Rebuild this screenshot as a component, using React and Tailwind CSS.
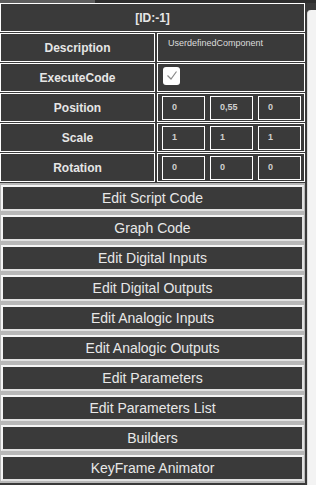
import React, { useState } from 'react';

const font = { fontFamily: '"Liberation Sans", Arial, sans-serif' };

const rows = [
    { label: 'Position', values: ['0', '0,55', '0'] },
    { label: 'Scale', values: ['1', '1', '1'] },
    { label: 'Rotation', values: ['0', '0', '0'] },
];

const buttons = [
    'Edit Script Code',
    'Graph Code',
    'Edit Digital Inputs',
    'Edit Digital Outputs',
    'Edit Analogic Inputs',
    'Edit Analogic Outputs',
    'Edit Parameters',
    'Edit Parameters List',
    'Builders',
    'KeyFrame Animator',
];

const Row = ({ label, children }) => (
    <div className="flex h-[30px] pt-[1px] gap-[2px]">
        <div className="w-[155px] border border-white flex items-center justify-center text-[12px] font-bold text-[#e6e6e6]">
            {label}
        </div>
        <div className="flex-1 border border-white flex items-center">{children}</div>
    </div>
);

const App = () => {
    const [execute, setExecute] = useState(true);

    return (
        <div className="w-[316px] h-[485px] bg-[#3a3a3a] overflow-hidden flex flex-col" style={font}>
            <div className="h-[3px] flex">
                <div className="w-[95px] bg-[#5e5e5e]" />
                <div className="flex-1 bg-[#2e2e2e]" />
            </div>
            <div className="flex flex-1">
                <div className="w-[305px] flex flex-col">
                    {/* Header */}
                    <div className="h-[29px] border border-white flex items-center justify-center text-[12px] font-bold text-[#e6e6e6]">
                        [ID:-1]
                    </div>

                    <Row label="Description">
                        <span className="pl-[10px] -mt-[8px] text-[9px] text-[#dcdcdc]">UserdefinedComponent</span>
                    </Row>
                    <Row label="ExecuteCode">
                        <button
                            onClick={() => setExecute(!execute)}
                            className="ml-[5px] -mt-[4px] w-[17px] h-[18px] rounded-[3px] bg-white flex items-center justify-center"
                        >
                            {execute && (
                                <svg width="12" height="11" viewBox="0 0 12 11" fill="none">
                                    <path d="M1.5 5.5 L5 9 L10.5 1.5" stroke="#8a8a8a" strokeWidth="1.2" />
                                </svg>
                            )}
                        </button>
                    </Row>
                    {rows.map(r => (
                        <Row key={r.label} label={r.label}>
                            <div className="flex gap-[5px] pl-[4px] w-full">
                                {r.values.map((v, i) => (
                                    <div key={i} className="w-[43px] h-[24px] border border-white flex items-center pl-[9px] text-[9px] font-bold text-[#d0d0d0]">
                                        {v}
                                    </div>
                                ))}
                            </div>
                        </Row>
                    ))}

                    {/* Buttons */}
                    <div className="flex flex-col pt-[1px]">
                        {buttons.map(b => (
                            <div key={b} className="h-[30px] bg-[#b8b8b8] px-[1px] py-[2px]">
                                <button className="w-full h-full bg-[#3a3a3a] border-2 border-t-[#f4f4f4] border-l-[#f4f4f4] border-b-[#e0e0e0] border-r-[#e0e0e0] text-[14px] text-[#e8e8e8]">
                                    {b}
                                </button>
                            </div>
                        ))}
                    </div>
                </div>
                {/* scrollbar */}
                <div className="flex-1 pl-[2px] pt-[7px]">
                    <div className="h-full bg-[#f3f3f3] rounded-tl-[4px] border-l border-[#dcdcdc]" />
                </div>
            </div>
        </div>
    );
};

export default App;
